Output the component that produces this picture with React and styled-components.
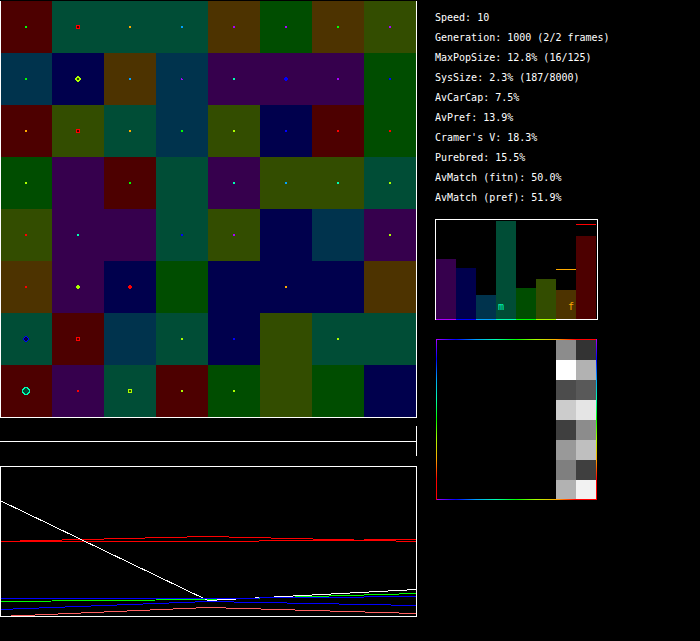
import React from "react";
import styled, { createGlobalStyle } from "styled-components";

const BRIGHT = {
  R: "#ff0000",
  O: "#ffaa00",
  L: "#aaff00",
  G: "#00ff00",
  T: "#00ffb2",
  S: "#00a2ff",
  B: "#0000ff",
  P: "#aa00ff",
};

const DARK = {
  R: "#4d0000",
  O: "#4d3300",
  L: "#334d00",
  G: "#004d00",
  T: "#004d36",
  S: "#00334d",
  B: "#00004d",
  P: "#36004d",
};

const HABITATS = [
  "RTTTOGOL",
  "SBOSPPPG",
  "RLTSLBRG",
  "GPRTPLLT",
  "LPPTLBSP",
  "OPBGBBBO",
  "TRSTBLTT",
  "RPTRGLGB",
];

// Each entry is a colour key plus a population shape; "-" is an empty habitat.
const POPULATIONS = [
  "G R:box O S P P G P",
  "G L:ring S P:chip T B:plus P B",
  "O R:box O G L B R R",
  "L - G - T S T L",
  "R T - B P - - L",
  "R L:plus R:plus - - O - -",
  "B:orb R:box - L B - L -",
  "T:disc R L:box L L - - -",
].map((row) => row.split(" "));

// "x" is the bright pixel, "o" the dark one.
const SHAPES = {
  dot: ["xx", "xx"],
  chip: ["x.", "xx"],
  box: ["xxxx", "xoox", "xoox", "xxxx"],
  plus: [".xx.", "xxxx", "xxxx", ".xx."],
  ring: ["..xx..", ".xxxx.", "xxooxx", "xxooxx", ".xxxx.", "..xx.."],
  orb: ["..xx..", ".xoox.", "xoooox", "xoooox", ".xoox.", "..xx.."],
  disc: [
    "..xxxx..",
    ".xxooxx.",
    "xxooooxx",
    "xoooooox",
    "xoooooox",
    "xxooooxx",
    ".xxooxx.",
    "..xxxx..",
  ],
};

const STATS = [
  ["Speed", "10"],
  ["Generation", "1000 (2/2 frames)"],
  ["MaxPopSize", "12.8% (16/125)"],
  ["SysSize", "2.3% (187/8000)"],
  ["AvCarCap", "7.5%"],
  ["AvPref", "13.9%"],
  ["Cramer's V", "18.3%"],
  ["Purebred", "15.5%"],
  ["AvMatch (fitn)", "50.0%"],
  ["AvMatch (pref)", "51.9%"],
];

const BARS = [
  { hue: "P", size: 60 },
  { hue: "B", size: 51 },
  { hue: "S", size: 24 },
  { hue: "T", size: 98, tag: "m" },
  { hue: "G", size: 31 },
  { hue: "L", size: 40 },
  { hue: "O", size: 29, tag: "f", end: true, mark: 50, base: "#fff" },
  { hue: "R", size: 83, mark: 95, base: "#fff" },
];

const MATCHES = [
  ["#8c8c8c", "#333333"],
  ["#ffffff", "#b2b2b2"],
  ["#4c4c4c", "#595959"],
  ["#cccccc", "#e5e5e5"],
  ["#3f3f3f", "#8c8c8c"],
  ["#999999", "#bfbfbf"],
  ["#7f7f7f", "#3f3f3f"],
  ["#b2b2b2", "#f2f2f2"],
];

const SERIES = [
  { color: "#ff0000", points: [74, 74, 72] },
  { color: "#ff0000", points: [74, 69, 74] },
  { color: "#ff6060", points: [149, 140, 146] },
  { color: "#00ff00", points: [134, 132, 126] },
  { color: "#ffffff", points: [33, 133, 122] },
  { color: "#0000ff", points: [142, 134, 138] },
  { color: "#0000ff", points: [131, 131, 129] },
];

const SPECTRUM = "#aa00ff, #0000ff 20px, #00a2ff 40px, #00ffb2 60px, #00ff00 80px, #aaff00 100px, #ffaa00 120px, #ff0000 140px";

const GlobalStyle = createGlobalStyle`
  body {
    margin: 0;
    background: #000;
    color: #fff;
    font: 10px/20px "DejaVu Sans Mono", "Liberation Mono", monospace;
  }
  *, *::before, *::after { box-sizing: border-box; }
`;

const Page = styled.main`
  display: flex;
  gap: 18px;
`;

const World = styled.section`
  flex: 0 1 417px;
  min-width: 0;
  padding-top: 1px;
`;

const Board = styled.div`
  display: grid;
  grid-template-columns: repeat(8, 1fr);
  border: solid #fff;
  border-width: 0 1px 1px 0;
`;

const Habitat = styled.div`
  display: grid;
  place-items: center;
  aspect-ratio: 1;
  background: ${(p) => DARK[p.$hue]};
  &:nth-child(8n + 1) {
    box-shadow: inset 1px 0 #fff;
  }
`;

const Glyph = styled.svg`
  display: block;
  shape-rendering: crispEdges;
`;

const Timeline = styled.div`
  display: flex;
  align-items: center;
  height: 30px;
  margin: 8px 0 10px;
  padding-top: 1px;
  border-right: 1px solid #fff;
`;

const TimelineTrack = styled.div`
  flex: 1;
  height: 1px;
  background: #fff;
`;

const History = styled.div`
  height: 151px;
  border: 1px solid #fff;
`;

const HistoryPlot = styled.svg`
  display: block;
  width: 100%;
  height: 100%;
  fill: none;
  shape-rendering: crispEdges;
`;

const Report = styled.aside`
  flex: 1 0 200px;
  padding-top: 8px;
`;

const StatList = styled.dl`
  margin: 0 0 11px;
`;

const Stat = styled.div`
  display: flex;
  gap: 6px;
  white-space: nowrap;
`;

const StatName = styled.dt`
  &::after {
    content: ":";
  }
`;

const StatValue = styled.dd`
  margin: 0;
`;

const Histogram = styled.div`
  display: flex;
  align-items: flex-end;
  width: 163px;
  height: 101px;
  border: 1px solid #fff;
`;

const Column = styled.div`
  position: relative;
  display: flex;
  flex-direction: column;
  justify-content: flex-end;
  flex: 0 0 20px;
  height: 100px;
  margin-bottom: -1px;
`;

const Bar = styled.div`
  display: flex;
  align-items: flex-end;
  justify-content: ${(p) => (p.$end ? "flex-end" : "flex-start")};
  box-sizing: content-box;
  height: ${(p) => p.$size}px;
  border-bottom: 1px solid ${(p) => p.$base};
  background: ${(p) => DARK[p.$hue]};
  color: ${(p) => BRIGHT[p.$hue]};
`;

const BarTag = styled.span`
  padding: 0 2px 2px;
`;

const Marker = styled.div`
  position: absolute;
  left: 0;
  right: 0;
  bottom: ${(p) => p.$level}px;
  height: 1px;
  background: ${(p) => BRIGHT[p.$hue]};
`;

const Matrix = styled.div`
  display: grid;
  grid-template-columns: 20px 20px;
  grid-template-rows: repeat(7, 20px) 19px;
  justify-content: end;
  width: 161px;
  margin: 19px 0 0 1px;
  padding: 1px;
  background:
    linear-gradient(180deg, ${SPECTRUM}) left / 1px 100% no-repeat,
    linear-gradient(180deg, ${SPECTRUM}) right / 1px 100% no-repeat,
    linear-gradient(90deg, ${SPECTRUM}) top / 100% 1px no-repeat,
    linear-gradient(90deg, ${SPECTRUM}) bottom / 100% 1px no-repeat;
`;

const Match = styled.div`
  background: ${(p) => p.$shade};
`;

function Population({ code }) {
  if (code === "-") return null;
  const [hue, shape = "dot"] = code.split(":");
  const rows = SHAPES[shape];
  const size = rows.length;
  const trace = (key) =>
    rows
      .flatMap((row, y) =>
        [...row].map((c, x) => (c === key ? `M${x} ${y}h1v1h-1z` : ""))
      )
      .join("");
  return (
    <Glyph width={size} height={size} viewBox={`0 0 ${size} ${size}`}>
      <path d={trace("o")} fill={DARK[hue]} />
      <path d={trace("x")} fill={BRIGHT[hue]} />
    </Glyph>
  );
}

export default function App() {
  return (
    <>
      <GlobalStyle />
      <Page>
        <World>
          <Board>
            {HABITATS.flatMap((row, y) =>
              [...row].map((hue, x) => (
                <Habitat key={`${x}-${y}`} $hue={hue}>
                  <Population code={POPULATIONS[y][x]} />
                </Habitat>
              ))
            )}
          </Board>
          <Timeline>
            <TimelineTrack />
          </Timeline>
          <History>
            <HistoryPlot viewBox="1 0 415 149" preserveAspectRatio="none">
              {SERIES.map(({ color, points: [a, b, c] }, i) => (
                <path
                  key={i}
                  stroke={color}
                  d={`M0 ${a + 0.5}L208 ${b + 0.5}L416 ${c + 0.5}`}
                />
              ))}
            </HistoryPlot>
          </History>
        </World>
        <Report>
          <StatList>
            {STATS.map(([name, value]) => (
              <Stat key={name}>
                <StatName>{name}</StatName>
                <StatValue>{value}</StatValue>
              </Stat>
            ))}
          </StatList>
          <Histogram>
            {BARS.map(({ hue, size, tag, end, mark, base }) => (
              <Column key={hue}>
                {mark && <Marker $hue={hue} $level={mark} />}
                <Bar $hue={hue} $size={size} $end={end} $base={base || BRIGHT[hue]}>
                  {tag && <BarTag>{tag}</BarTag>}
                </Bar>
              </Column>
            ))}
          </Histogram>
          <Matrix>
            {MATCHES.flat().map((shade, i) => (
              <Match key={i} $shade={shade} />
            ))}
          </Matrix>
        </Report>
      </Page>
    </>
  );
}
